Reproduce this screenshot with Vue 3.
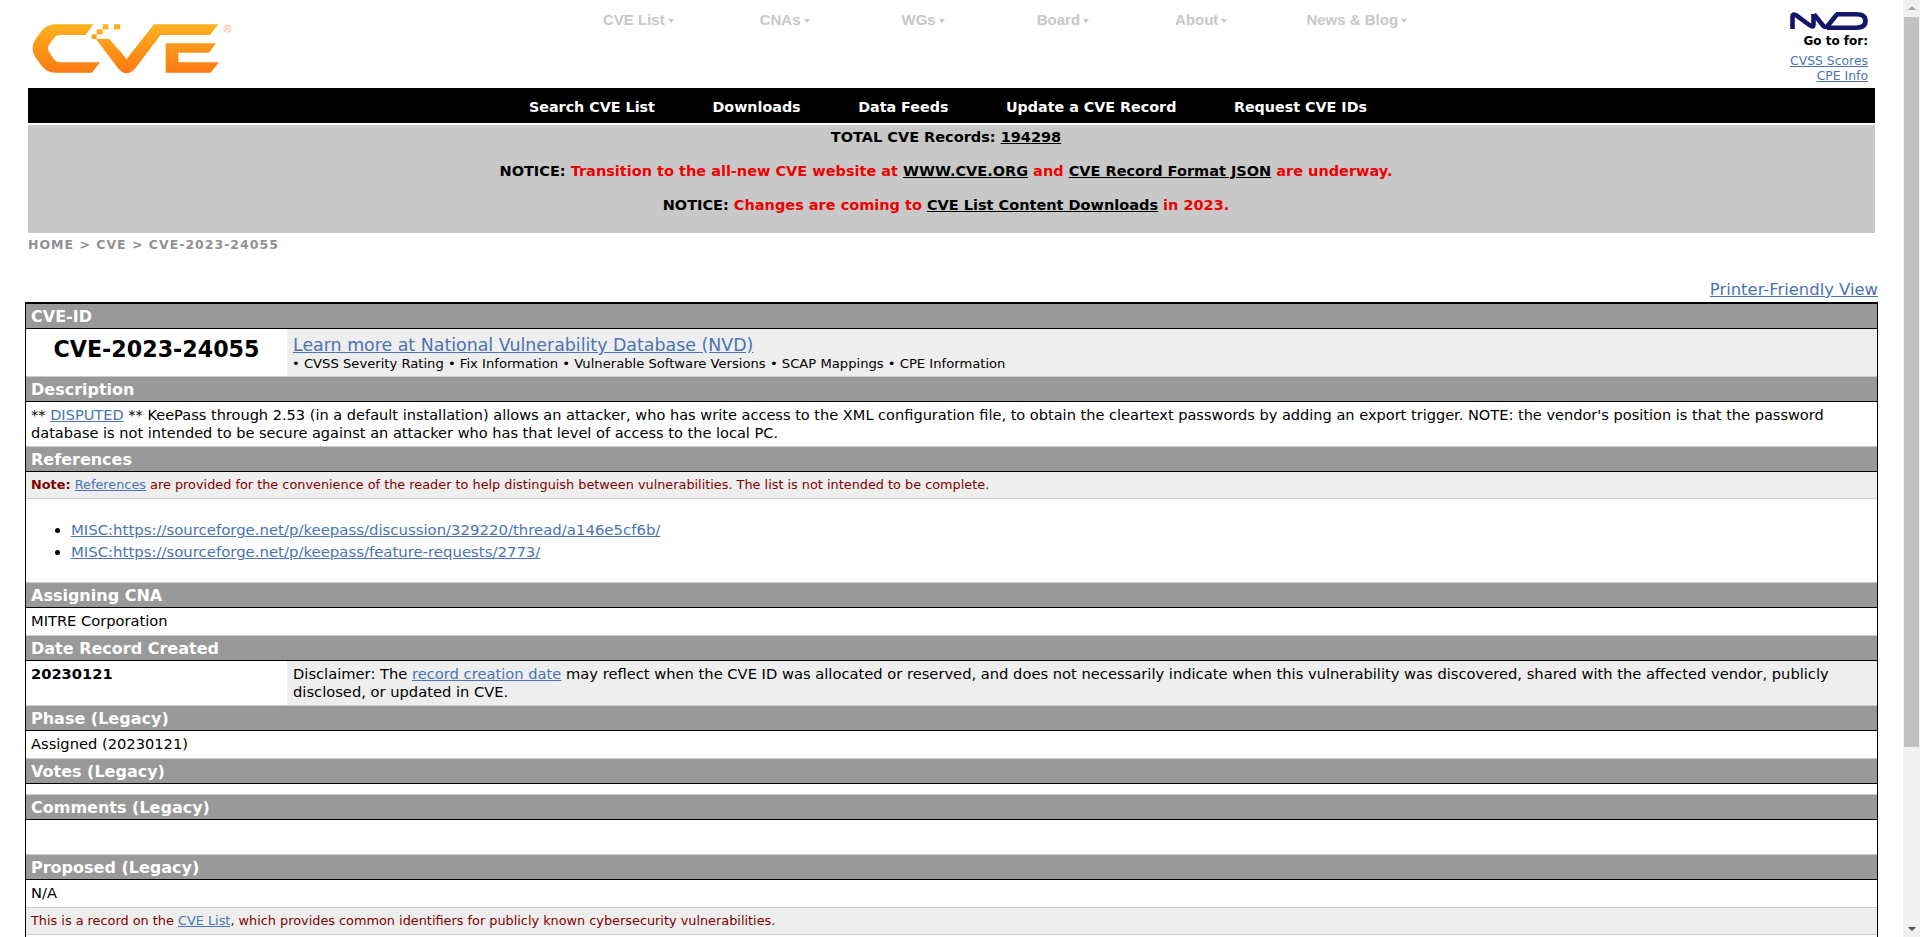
<script setup>
const menu = ["CVE List", "CNAs", "WGs", "Board", "About", "News & Blog"];
const subnav = ["Search CVE List", "Downloads", "Data Feeds", "Update a CVE Record", "Request CVE IDs"];
</script>

<template>
  <div class="page">
    <header class="top">
      <svg class="logo" viewBox="0 0 720 240" width="240" height="80">
        <defs>
          <linearGradient id="cveGrad" gradientUnits="userSpaceOnUse" x1="0" y1="58" x2="0" y2="205">
            <stop offset="0" stop-color="#fdb220" />
            <stop offset="1" stop-color="#fb7812" />
          </linearGradient>
        </defs>
        <g fill="url(#cveGrad)">
          <path d="M250 58 L135 58 Q112 58 96 76 L75 105 Q60 130 75 155 L96 184 Q112 203 135 203 L246 203 L270 172 L150 172 Q138 172 130 160 L118 142 Q110 130 118 118 L130 102 Q138 90 150 90 L226 90 Z" />
          <path d="M258 102 L298 102 L350 162 L432 58 L625 58 L600 90 L452 90 L376 190 Q350 220 324 190 Z" />
          <path d="M467 115 L618 115 L597 143 L505 143 L505 172 L627 172 L602 203 L467 203 Z" />
          <rect x="278" y="58" width="17" height="15" />
          <rect x="312" y="58" width="18" height="15" />
          <rect x="260" y="73" width="18" height="15" />
          <rect x="245" y="88" width="15" height="14" />
        </g>
        <circle cx="652" cy="71" r="11" fill="none" stroke="#f6b26b" stroke-width="2" />
        <path d="M648 77 V65 H654 Q657 65 657 68 Q657 71 654 71 H648 M653 71 L657 77" fill="none" stroke="#f6b26b" stroke-width="2" />
      </svg>
      <nav class="menu">
        <span v-for="item in menu" :key="item" class="menu-item">{{ item }}<i class="caret"></i></span>
      </nav>
      <div class="nvd">
        <svg class="nvd-logo" viewBox="0 0 78 18" width="78" height="18">
          <g fill="none" stroke="#14146b" stroke-width="4.6" stroke-linejoin="round">
            <path d="M2.5 17 V4.5 Q2.5 1.5 6 3.2 L20 13.5 Q23.5 16 23.5 12.5 V2" />
            <path d="M24 2.3 L33 13.5 Q35.5 16.5 38 13.5 L47 2.3" />
            <path d="M37 15.7 H66 Q75.5 15.7 75.5 9 Q75.5 2.3 66 2.3 H46" />
          </g>
        </svg>
        <b class="goto">Go to for:</b>
        <a class="link">CVSS Scores</a>
        <a class="link">CPE Info</a>
      </div>
    </header>

    <nav class="subnav">
      <span v-for="item in subnav" :key="item">{{ item }}</span>
    </nav>

    <section class="notices">
      <p><span>TOTAL CVE Records: </span><u>194298</u></p>
      <p>NOTICE: <em>Transition to the all-new CVE website at </em><u>WWW.CVE.ORG</u><em> and </em><u>CVE Record Format JSON</u><em> are underway.</em></p>
      <p>NOTICE: <em>Changes are coming to </em><u>CVE List Content Downloads</u><em> in 2023.</em></p>
    </section>

    <div class="crumbs">HOME &gt; CVE &gt; CVE-2023-24055</div>
    <div class="printer"><a class="link">Printer-Friendly View</a></div>

    <main class="record">
      <h2>CVE-ID</h2>
      <div class="split id-row">
        <div class="side cve-id">CVE-2023-24055</div>
        <div class="aside">
          <a class="link nvd-link">Learn more at National Vulnerability Database (NVD)</a>
          <div class="bullets">• CVSS Severity Rating • Fix Information • Vulnerable Software Versions • SCAP Mappings • CPE Information</div>
        </div>
      </div>

      <h2>Description</h2>
      <div class="cell desc">** <a class="link">DISPUTED</a> ** KeePass through 2.53 (in a default installation) allows an attacker, who has write access to the XML configuration file, to obtain the cleartext passwords by adding an export trigger. NOTE: the vendor's position is that the password database is not intended to be secure against an attacker who has that level of access to the local PC.</div>

      <h2>References</h2>
      <div class="note"><b>Note:</b> <a class="link">References</a> are provided for the convenience of the reader to help distinguish between vulnerabilities. The list is not intended to be complete.</div>
      <ul class="refs">
        <li><a class="link">MISC:https://sourceforge.net/p/keepass/discussion/329220/thread/a146e5cf6b/</a></li>
        <li><a class="link">MISC:https://sourceforge.net/p/keepass/feature-requests/2773/</a></li>
      </ul>

      <h2>Assigning CNA</h2>
      <div class="cell">MITRE Corporation</div>

      <h2>Date Record Created</h2>
      <div class="split date-row">
        <div class="side date">20230121</div>
        <div class="aside disclaimer">Disclaimer: The <a class="link">record creation date</a> may reflect when the CVE ID was allocated or reserved, and does not necessarily indicate when this vulnerability was discovered, shared with the affected vendor, publicly disclosed, or updated in CVE.</div>
      </div>

      <h2>Phase (Legacy)</h2>
      <div class="cell">Assigned (20230121)</div>

      <h2>Votes (Legacy)</h2>
      <div class="blank votes"></div>

      <h2>Comments (Legacy)</h2>
      <div class="blank comments"></div>

      <h2>Proposed (Legacy)</h2>
      <div class="cell">N/A</div>
      <div class="note">This is a record on the <a class="link">CVE List</a>, which provides common identifiers for publicly known cybersecurity vulnerabilities.</div>
      <div class="blank tail"></div>
    </main>

    <div class="scrollbar">
      <i class="arrow up"></i>
      <div class="thumb"></div>
      <i class="arrow down"></i>
    </div>
  </div>
</template>

<style>
html, body {
  margin: 0;
  height: 937px;
  overflow: hidden;
  background: #fff;
}
</style>

<style scoped>
.page {
  width: 1903px;
  height: 937px;
  overflow: hidden;
  font-family: "DejaVu Sans", Verdana, sans-serif;
  font-size: 14.67px;
  color: #000;
}

.link {
  color: #4a74b5;
  text-decoration: underline;
}

.top {
  display: flex;
  height: 88px;
}

.logo {
  margin: 5px 0 0 10px;
  flex: none;
}

.menu {
  display: flex;
  margin: 11px 0 0 353px;
  height: 16px;
  font-family: "Liberation Sans", Arial, sans-serif;
  font-weight: bold;
  font-size: 15px;
  color: #c8c8c8;
}

.menu-item {
  white-space: nowrap;
  margin-left: 86px;
}

.menu-item:first-child {
  margin-left: 0;
}

.menu-item:nth-child(3),
.menu-item:nth-child(4) {
  margin-left: 92px;
}

.menu-item:nth-child(6) {
  margin-left: 79px;
}

.caret {
  display: inline-block;
  margin-left: 3px;
  vertical-align: 2px;
  border: 3.5px solid transparent;
  border-top: 4px solid #c8c8c8;
  border-bottom: 0;
}

.nvd {
  margin-left: auto;
  margin-right: 35px;
  padding-top: 12px;
  display: flex;
  flex-direction: column;
  align-items: flex-end;
  font-size: 12.4px;
  line-height: 15px;
}

.nvd-logo {
  display: block;
  margin-bottom: 4px;
}

.goto {
  font-size: 12px;
  margin-bottom: 4px;
}

.subnav {
  margin: 0 28px;
  height: 35px;
  padding: 2px 7px 0 0;
  box-sizing: border-box;
  background: #000;
  color: #fff;
  font-weight: bold;
  font-size: 14.3px;
  display: flex;
  justify-content: center;
  align-items: center;
  gap: 57.5px;
}

.notices {
  margin: 2px 28px 0;
  height: 108px;
  padding-right: 11px;
  box-sizing: border-box;
  background: #c8c8c8;
  font-weight: bold;
  font-size: 14.5px;
  text-align: center;
}

.notices p {
  margin: 0;
  height: 34px;
  line-height: 24px;
}

.notices em {
  font-style: normal;
  color: #f00000;
}

.crumbs {
  margin: 2px 28px 0;
  line-height: 20px;
  font-weight: bold;
  font-size: 12.5px;
  letter-spacing: 1px;
  color: #919191;
}

.printer {
  margin: 25px 25px 0 0;
  height: 22px;
  text-align: right;
  font-size: 16.4px;
  line-height: 20px;
}

.record {
  margin: 0 25px;
  border: 1px solid #000;
  border-top-width: 2px;
  line-height: 18px;
}

h2 {
  margin: 0;
  height: 24px;
  padding-left: 5px;
  background: #999;
  color: #fff;
  border-bottom: 1px solid #000;
  font-size: 16px;
  line-height: 25px;
  font-weight: bold;
}

.split {
  display: flex;
  box-sizing: border-box;
  border-bottom: 1px solid #ccc;
}

.side {
  width: 261px;
  box-sizing: border-box;
  flex: none;
  padding: 5px;
}

.aside {
  flex: 1;
  padding: 5px 5px 5px 6px;
  background: #eee;
}

.id-row {
  height: 48px;
}

.date-row {
  height: 45px;
}

.cve-id {
  font-size: 22.2px;
  font-weight: bold;
  text-align: center;
  line-height: 28px;
  padding: 6px 0 0;
}

.aside.disclaimer {
  padding-top: 4px;
  font-size: 14.7px;
}

.date {
  font-weight: bold;
  padding-top: 4px;
}

.nvd-link {
  display: block;
  font-size: 17.4px;
  line-height: 20px;
  margin-top: 1px;
}

.bullets {
  font-size: 13.15px;
  line-height: 18px;
  margin-left: -1px;
}

.cell {
  padding: 4px 5px 5px;
  border-bottom: 1px solid #ccc;
}

.cell.desc {
  padding: 4px 5px;
  font-size: 14.55px;
}

.note {
  padding: 4px 5px;
  height: 18px;
  background: #eee;
  border-bottom: 1px solid #ccc;
  color: #800000;
  font-size: 12.85px;
}

.refs {
  margin: 0;
  height: 84px;
  box-sizing: border-box;
  padding: 20px 0 0 45px;
  border-bottom: 1px solid #ccc;
  font-size: 14.9px;
  line-height: 22px;
}

.blank {
  border-bottom: 1px solid #ccc;
}

.votes {
  height: 10px;
}

.comments {
  height: 34px;
}

.tail {
  height: 60px;
  border-bottom: 0;
}

.scrollbar {
  position: fixed;
  top: 0;
  right: 0;
  bottom: 0;
  width: 17px;
  background: #f1f1f1;
  display: flex;
  flex-direction: column;
  align-items: center;
}

.thumb {
  width: 15px;
  height: 730px;
  background: #c1c1c1;
}

.arrow {
  border: 4px solid transparent;
  flex: none;
}

.arrow.up {
  border-bottom: 4px solid #a3a3a3;
  border-top: 0;
  margin: 6px 0 7px;
}

.arrow.down {
  border-top: 4px solid #505050;
  border-bottom: 0;
  margin-top: auto;
  margin-bottom: 6px;
}
</style>
